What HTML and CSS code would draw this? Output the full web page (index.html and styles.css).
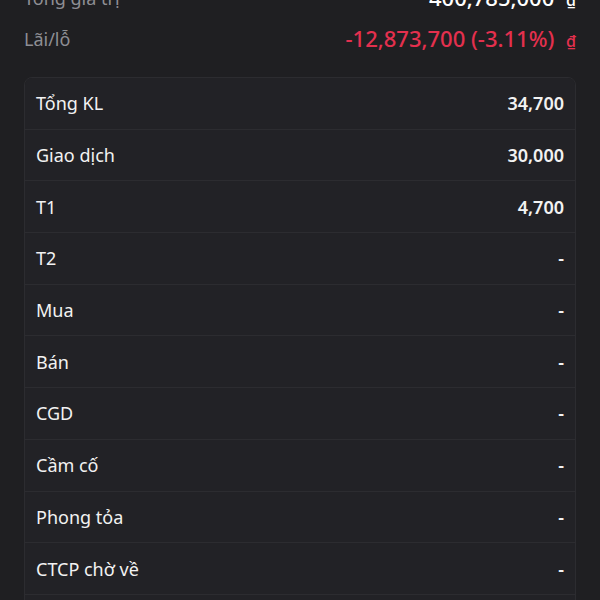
FILE: index.html
```html
<!DOCTYPE html>
<html lang="vi">
  <head>
    <meta charset="UTF-8" />
    <meta name="viewport" content="width=device-width, initial-scale=1" />
    <title>Tài sản</title>
    <link rel="stylesheet" href="styles.css">
  </head>
  <body>
    <!-- Summary -->
    <div class="summary">
      <div class="summary-row">
        <span class="summary-label">Tổng giá trị</span>
        <span class="summary-value">400,785,000 <span class="currency">₫</span></span>
      </div>
      <div class="summary-row">
        <span class="summary-label">Lãi/lỗ</span>
        <span class="summary-value loss">-12,873,700 (-3.11%) <span class="currency">₫</span></span>
      </div>
    </div>

    <!-- Volume breakdown -->
    <div class="detail-card">
      <div class="detail-row"><span>Tổng KL</span><span class="detail-value">34,700</span></div>
      <div class="detail-row"><span>Giao dịch</span><span class="detail-value">30,000</span></div>
      <div class="detail-row"><span>T1</span><span class="detail-value">4,700</span></div>
      <div class="detail-row"><span>T2</span><span class="detail-value">-</span></div>
      <div class="detail-row"><span>Mua</span><span class="detail-value">-</span></div>
      <div class="detail-row"><span>Bán</span><span class="detail-value">-</span></div>
      <div class="detail-row"><span>CGD</span><span class="detail-value">-</span></div>
      <div class="detail-row"><span>Cầm cố</span><span class="detail-value">-</span></div>
      <div class="detail-row"><span>Phong tỏa</span><span class="detail-value">-</span></div>
      <div class="detail-row"><span>CTCP chờ về</span><span class="detail-value">-</span></div>
      <div class="detail-row"><span>Quyền chờ về</span><span class="detail-value">-</span></div>
    </div>
  </body>
</html>
```

FILE: styles.css
```css
/* Global */
html,
body {
  margin: 0;
  background-color: #1f1f22;
  font-family: "Noto Sans", sans-serif;
  color: #f2f2f2;
}
body {
  height: 600px;
  overflow: hidden;
  padding: 0 24px;
}
/* Summary lines above the card */
.summary {
  margin-top: -14px;
  display: flex;
  flex-direction: column;
  gap: 17px;
}
.summary-row {
  display: flex;
  justify-content: space-between;
  align-items: center;
  height: 24px;
  font-size: 18px;
  line-height: 24px;
}
.summary-label {
  color: #8e8e94;
}
.summary-value {
  font-size: 22px;
  font-weight: 500;
  color: #ffffff;
}
.summary-value.loss {
  color: #e4304e;
}
.currency {
  font-size: 16px;
  margin-left: 6px;
}
/* Detail card */
.detail-card {
  margin-top: 26px;
  border: 1px solid #2c2c30;
  border-radius: 8px;
  overflow: hidden;
}
.detail-row {
  display: flex;
  justify-content: space-between;
  align-items: center;
  box-sizing: border-box;
  height: 51.7px;
  padding: 0 11px;
  background-color: #222226;
  border-bottom: 1px solid #2c2c30;
  font-size: 18px;
}
.detail-value {
  font-weight: 600;
}
```
